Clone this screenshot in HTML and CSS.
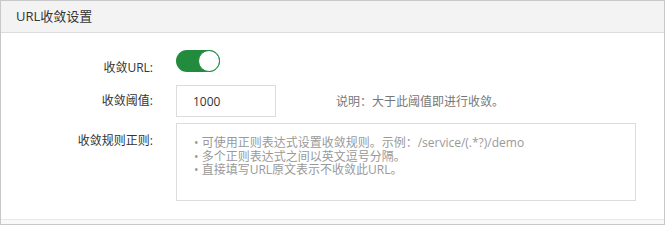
FILE: index.html
```html
<!DOCTYPE html>
<html lang="zh-CN">
<head>
<meta charset="utf-8">
<title>URL收敛设置</title>
<link rel="stylesheet" href="styles.css">
</head>
<body>
<section class="panel">
  <header class="panel-header">URL收敛设置</header>
  <div class="panel-body">
    <div class="form-row row-switch">
      <label class="form-label">收敛URL:</label>
      <div class="form-control">
        <span class="switch is-on" role="switch" aria-checked="true"><span class="switch-knob"></span></span>
      </div>
    </div>
    <div class="form-row row-input">
      <label class="form-label">收敛阈值:</label>
      <div class="form-control">
        <input class="text-input" type="text" value="1000">
        <span class="form-hint">说明：大于此阈值即进行收敛。</span>
      </div>
    </div>
    <div class="form-row row-textarea">
      <label class="form-label">收敛规则正则:</label>
      <div class="form-control">
        <textarea class="text-area" placeholder="• 可使用正则表达式设置收敛规则。示例：/service/(.*?)/demo&#10;• 多个正则表达式之间以英文逗号分隔。&#10;• 直接填写URL原文表示不收敛此URL。"></textarea>
      </div>
    </div>
  </div>
  <footer class="panel-footer"></footer>
</section>
</body>
</html>
```
FILE: styles.css
```css
* { box-sizing: border-box; }
html, body { margin: 0; padding: 0; background: #fff; }
body {
  font-family: "Open Sans", "Noto Sans CJK SC", sans-serif;
  font-size: 12px;
  color: #333;
}
.panel {
  width: 665px;
  height: 225px;
  border: 1px solid #c8c8c8;
  display: flex;
  flex-direction: column;
}
.panel-header {
  height: 32px;
  line-height: 31px;
  background: #f3f3f3;
  border-bottom: 1px solid #dcdcdc;
  padding-left: 15px;
  font-size: 13px;
  color: #333;
}
.panel-body {
  flex: 1;
  padding-top: 17px;
}
.panel-footer {
  height: 5px;
  border-top: 1px solid #e8e8e8;
  background: #f8f8f8;
}
.form-row {
  display: flex;
  align-items: flex-start;
}
.form-label {
  width: 152px;
  text-align: right;
  line-height: 18px;
  color: #333;
  flex: none;
}
.form-control {
  margin-left: 23px;
  display: flex;
  align-items: center;
}
.row-switch { height: 22px; }
.row-switch .form-label { padding-top: 9px; }
.row-input { margin-top: 13px; align-items: center; }
.row-textarea { margin-top: 6px; }
.row-textarea .form-label { padding-top: 9px; }

.switch {
  position: relative;
  display: block;
  width: 44px;
  height: 22px;
  border-radius: 11px;
  background: #228b3e;
}
.switch-knob {
  position: absolute;
  right: 0;
  top: 0;
  width: 22px;
  height: 22px;
  border-radius: 50%;
  background: #fff;
  border: 1px solid #228b3e;
}
.text-input {
  width: 100px;
  height: 32px;
  border: 1px solid #dcdcdc;
  padding: 0 0 0 16px;
  font-family: inherit;
  font-size: 12px;
  color: #333;
  outline: none;
  margin: 0;
}
.form-hint {
  margin-left: 60px;
  color: #777;
}
.text-area {
  display: block;
  width: 460px;
  height: 78px;
  border: 1px solid #dcdcdc;
  padding: 12px 10px 0 17px;
  font-family: inherit;
  font-size: 12px;
  line-height: 13.5px;
  resize: none;
  outline: none;
  margin: 0;
  color: #333;
}
.text-area::placeholder {
  color: #999;
}
```
